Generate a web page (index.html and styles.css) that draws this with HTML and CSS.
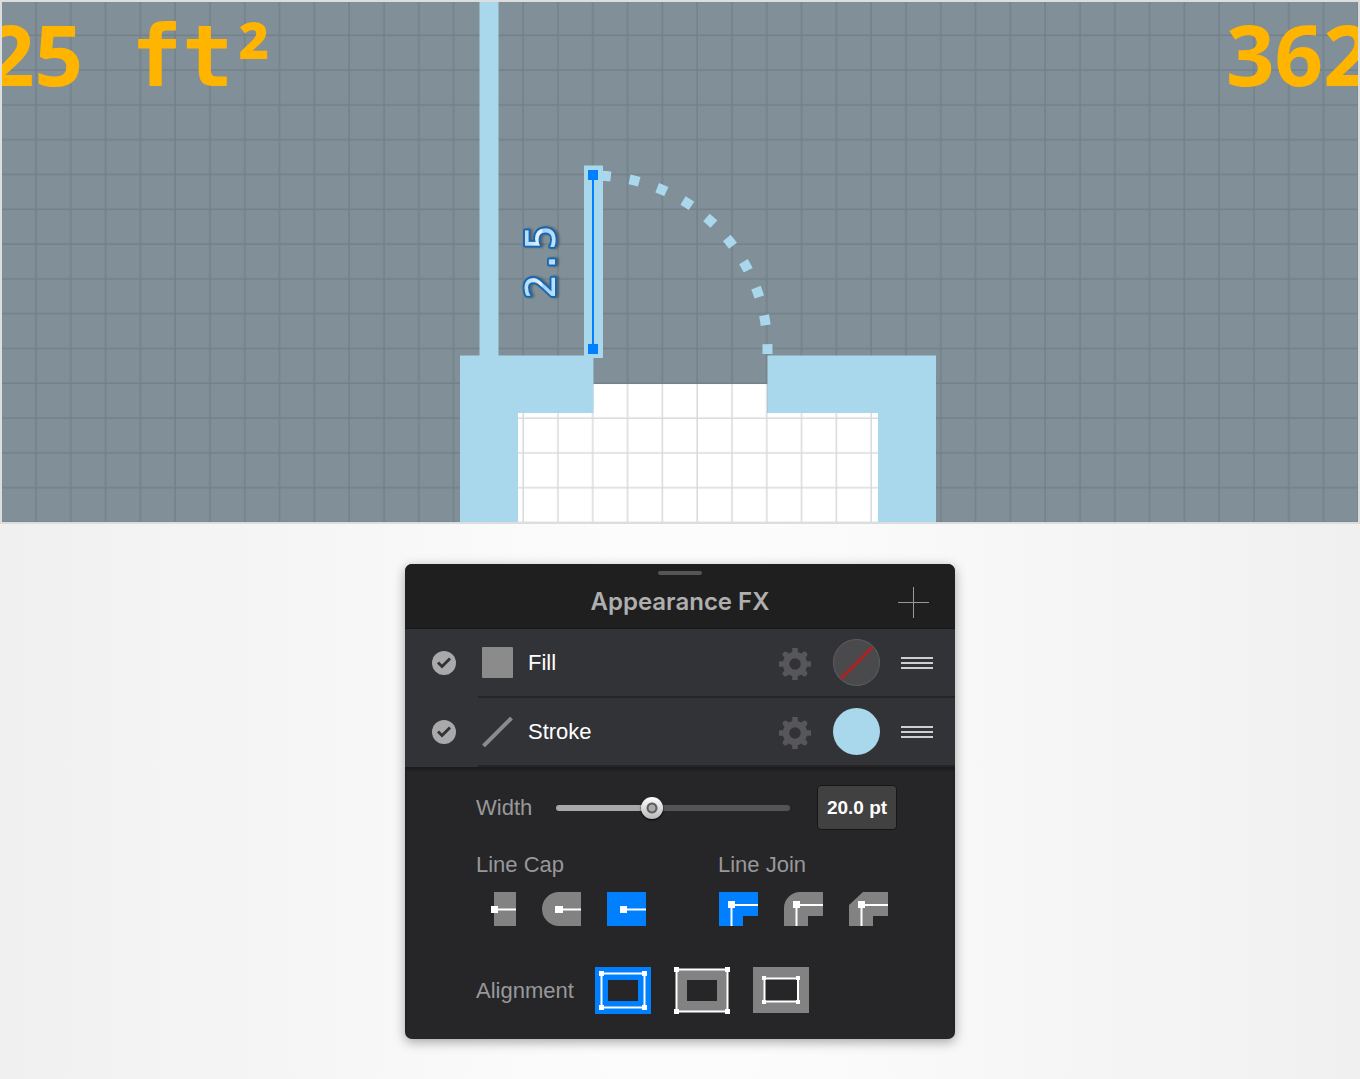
FILE: index.html
```html
<!DOCTYPE html>
<html lang="en">
<head>
<meta charset="utf-8">
<title>Appearance FX</title>
<link rel="stylesheet" href="styles.css">
</head>
<body>
<svg class="symbols" aria-hidden="true">
  <symbol id="gear" viewBox="-16 -16 32 32">
    <circle r="9" fill="none" stroke="currentColor" stroke-width="6.500"/>
    <g stroke="currentColor" stroke-width="5.500">
      <path d="M0-16V-10M0 16V10M-16 0H-10M16 0H10"/>
      <path stroke-linecap="round" d="M-9.500-9.500L-7-7M9.500 9.500L7 7M-9.500 9.500L-7 7M9.500-9.500L7-7"/>
    </g>
  </symbol>
</svg>

<svg class="plan" viewBox="2 2 1356 520" role="img" aria-label="Floor plan with a door selected">
  <defs>
    <pattern id="grid" x="2" y="1.300" width="34.8" height="34.8" patternUnits="userSpaceOnUse">
      <path class="grid-line" d="M0 34H34.8M34 0V34.8"/>
    </pattern>
    <linearGradient id="ink" x1="0" y1="0" x2="0" y2="1">
      <stop offset="0.2" stop-color="#b9dcf8"/>
      <stop offset="0.5" stop-color="#e6f5ff"/>
      <stop offset="0.55" stop-color="#9fd0fa"/>
      <stop offset="0.9" stop-color="#cdeaff"/>
    </linearGradient>
  </defs>
  <rect class="ground" x="2" y="2" width="1356" height="520"/>
  <path class="room" d="M593 384H767.500V413H878V522H518V413H593Z"/>
  <rect x="2" y="2" width="1356" height="520" fill="url(#grid)"/>
  <path class="wall" d="M479.500 2H498.500V355.500H593.500V413H518V522H460V355.500H479.500Z"/>
  <path class="wall" d="M767.500 355.500H936V522H878V413H767.500Z"/>
  <path class="swing" d="M767.500 354V350A174.500 174.500 0 0 0 593 175.500"/>
  <path class="door" d="M593.500 165.500V358"/>
  <path class="selection" d="M593 175V349"/>
  <path class="handle" d="M588 170h10v10h-10zM588 344h10v10h-10z"/>
  <text class="length" transform="translate(555 299) rotate(-90)">2.5</text>
  <text class="area" x="-14" y="86">25</text>
  <text class="area" x="131" y="86"><tspan class="unit">ft</tspan><tspan x="238" y="94">²</tspan></text>
  <text class="area" x="1226" y="86">362</text>
</svg>

<main class="stage">
  <section class="panel" aria-labelledby="panel-title">
    <header class="panel-head">
      <span class="grip"></span>
      <h1 id="panel-title">Appearance FX</h1>
      <button class="add" type="button" aria-label="Add">
        <svg width="31" height="31"><path d="M15.500 0V31M0 15.500H31"/></svg>
      </button>
    </header>

    <ul class="layers">
      <li class="layer">
        <span class="toggle"><input type="checkbox" id="fill-on" checked></span>
        <div class="layer-main">
          <svg class="kind" width="31" height="31"><rect width="31" height="31" rx="1"/></svg>
          <label for="fill-on">Fill</label>
          <button class="gear" type="button" aria-label="Fill options"><svg width="32" height="32"><use href="#gear"/></svg></button>
          <button class="swatch swatch-none" type="button" aria-label="Fill colour: none"><svg width="47" height="47"><path d="M8 39.500L39.500 8"/></svg></button>
          <button class="drag" type="button" aria-label="Reorder fill"><i></i><i></i><i></i></button>
        </div>
      </li>
      <li class="layer">
        <span class="toggle"><input type="checkbox" id="stroke-on" checked></span>
        <div class="layer-main">
          <svg class="kind" width="31" height="31"><path d="M1.500 30L29.500 2"/></svg>
          <label for="stroke-on">Stroke</label>
          <button class="gear" type="button" aria-label="Stroke options"><svg width="32" height="32"><use href="#gear"/></svg></button>
          <button class="swatch swatch-blue" type="button" aria-label="Stroke colour: light blue"></button>
          <button class="drag" type="button" aria-label="Reorder stroke"><i></i><i></i><i></i></button>
        </div>
      </li>
    </ul>

    <form class="settings">
      <div class="width-row">
        <label for="width">Width</label>
        <input class="slider" id="width" type="range" min="0" max="50" value="20">
        <input class="amount" type="text" value="20.0 pt" aria-label="Width value">
      </div>

      <div class="pair">
        <fieldset class="group">
          <legend>Line Cap</legend>
          <div class="options">
            <label class="option"><input type="radio" name="cap" aria-label="Butt cap">
              <svg width="39" height="34"><path class="shape" d="M17 0H39V34H17Z"/><path class="guide" d="M17 17.500H39"/><path class="node" d="M14 14h7v7h-7z"/></svg></label>
            <label class="option"><input type="radio" name="cap" aria-label="Round cap">
              <svg width="39" height="34"><path class="shape" d="M17 0H39V34H17A17 17 0 0 1 17 0Z"/><path class="guide" d="M17 17.500H39"/><path class="node" d="M13 14h8v7h-8z"/></svg></label>
            <label class="option"><input type="radio" name="cap" aria-label="Square cap" checked>
              <svg width="39" height="34"><path class="shape" d="M0 0H39V34H0Z"/><path class="guide" d="M17 17.500H39"/><path class="node" d="M13 14h7v7h-7z"/></svg></label>
          </div>
        </fieldset>
        <fieldset class="group">
          <legend>Line Join</legend>
          <div class="options">
            <label class="option"><input type="radio" name="join" aria-label="Miter join" checked>
              <svg width="39" height="34"><path class="shape" d="M0 0H39V24H24V34H0Z"/><path class="guide" d="M12.500 34V13H39"/><path class="node" d="M9 9h7v7h-7z"/></svg></label>
            <label class="option"><input type="radio" name="join" aria-label="Round join">
              <svg width="39" height="34"><path class="shape" d="M16 0H39V24H24V34H0V16A16 16 0 0 1 16 0Z"/><path class="guide" d="M12.500 34V13H39"/><path class="node" d="M9 9h7v7h-7z"/></svg></label>
            <label class="option"><input type="radio" name="join" aria-label="Bevel join">
              <svg width="39" height="34"><path class="shape" d="M14 0H39V24H24V34H0V13Z"/><path class="guide" d="M12.500 34V13H39"/><path class="node" d="M9 9h7v7h-7z"/></svg></label>
          </div>
        </fieldset>
      </div>

      <div class="align-row" role="radiogroup" aria-labelledby="align-title">
        <span class="align-title" id="align-title">Alignment</span>
        <label class="option"><input type="radio" name="align" aria-label="Centre" checked>
          <svg width="56" height="47"><path class="shape" fill-rule="evenodd" d="M0 0H56V47H0ZM13 13V34H43V13Z"/><path class="guide" d="M6.500 6.500H49.500V40.500H6.500Z"/><path class="node" d="M4 4h5v5h-5zM47 4h5v5h-5zM4 38h5v5h-5zM47 38h5v5h-5z"/></svg></label>
        <label class="option"><input type="radio" name="align" aria-label="Inside">
          <svg width="56" height="47"><path class="shape" fill-rule="evenodd" d="M2 2H54V45H2ZM13 13V34H43V13Z"/><path class="guide" d="M2.500 2.500H53.500V44.500H2.500Z"/><path class="node" d="M0 0h5v5h-5zM51 0h5v5h-5zM0 42h5v5h-5zM51 42h5v5h-5z"/></svg></label>
        <label class="option"><input type="radio" name="align" aria-label="Outside">
          <svg width="56" height="47"><path class="shape" fill-rule="evenodd" d="M0 0H56V46H0ZM11 11V35H45V11Z"/><path class="guide" d="M11.500 11.500H45V34.500H11.500Z"/><path class="node" d="M9 9h4v4h-4zM43 9h4v4h-4zM9 33h4v4h-4zM43 33h4v4h-4z"/></svg></label>
      </div>
    </form>
  </section>
</main>
</body>
</html>
```
FILE: styles.css
```css
* { box-sizing: border-box; }

body {
  margin: 0;
  font-family: "Liberation Sans", Arial, sans-serif;
  font-size: 22px;
  line-height: 26px;
  background: linear-gradient(90deg, #f0f0f0, #fcfcfc 45%, #fcfcfc 55%, #f0f0f0);
}

button, input { font: inherit; margin: 0; }
button { padding: 0; border: 0; background: none; flex: none; }
svg { display: block; }
.symbols { display: none; }

/* Floor plan */
.plan { width: 100%; height: auto; border: 2px solid #dcdedd; }
.ground { fill: #818f98; }
.room { fill: #fff; }
.grid-line { fill: none; stroke: #36464f; stroke-opacity: 0.2; stroke-width: 1.5; }
.wall { fill: #a9d7eb; }
.swing { fill: none; stroke: #a9d7eb; stroke-width: 10; stroke-dasharray: 10 18.9; }
.door { stroke: #a9d7eb; stroke-width: 19; }
.selection { stroke: #007fff; stroke-width: 2; }
.handle { fill: #007fff; }
.length {
  font-family: "DejaVu Sans Mono", monospace;
  font-size: 41px;
  fill: url(#ink);
  stroke: #1868b0;
  stroke-width: 4;
  stroke-linejoin: round;
  paint-order: stroke;
  filter: drop-shadow(0 2px 1px rgba(0, 0, 0, 0.3));
}
.area { font-family: "Noto Sans", sans-serif; font-weight: 700; font-size: 85px; fill: #ffb400; }
.unit { font-family: "DejaVu Sans Mono", monospace; }

/* Panel */
.stage { display: flex; justify-content: center; padding: 40px 16px; }
.panel {
  width: 100%;
  max-width: 550px;
  overflow: hidden;
  border-radius: 7px;
  background: #262628;
  box-shadow: 0 3px 12px rgba(0, 0, 0, 0.35);
}
.panel-head {
  display: grid;
  grid-template-columns: 1fr auto 1fr;
  align-items: center;
  padding: 7px 26px 0;
  background: #1f1f1f;
  border-bottom: 1px solid #17171a;
}
.grip { grid-column: 1 / -1; justify-self: center; width: 44px; height: 4px; border-radius: 2px; background: #555; }
.panel-head h1 {
  grid-column: 2;
  margin: 12px 0 11px;
  font: 600 24px/30px Inter, sans-serif;
  color: #afafaf;
}
.add { justify-self: end; padding-top: 2px; }
.add path { stroke: #999; stroke-width: 1; }

.layers { margin: 0; padding: 0; list-style: none; background: #323337; }
.layer { display: flex; }
.toggle { display: flex; align-items: center; flex: none; width: 73px; padding: 0 0 2px 27px; }
.toggle input {
  appearance: none;
  width: 24px;
  height: 24px;
  border-radius: 50%;
  background: #a9a9ab;
}
.toggle input:checked::before {
  content: "";
  display: block;
  width: 24px;
  height: 24px;
  background: #323337;
  clip-path: polygon(5px 13px, 7px 11px, 10px 14px, 17px 7px, 19px 9px, 10px 18px);
}
.layer-main {
  display: flex;
  flex: 1;
  align-items: center;
  height: 69px;
  padding: 0 22px 0 4px;
  border-bottom: 2px solid #252528;
}
.layer-main label { flex: 1; padding-left: 15px; color: #fff; }
.kind { flex: none; fill: #8b8b8b; stroke: none; }
.kind path { stroke: #8b8b8b; stroke-width: 4; }
.gear { margin-right: 22px; padding-top: 3px; color: #57575a; }
.swatch { width: 47px; height: 47px; margin-right: 21px; border-radius: 50%; }
.swatch-none { background: #4a4a4c; box-shadow: inset 0 0 0 1px #5a5a5c; }
.swatch-none path { stroke: #b0211f; stroke-width: 3; }
.swatch-blue { background: #a9d7eb; }
.drag { display: grid; gap: 3px; width: 32px; }
.drag i { height: 2px; background: #cfcfd2; }

/* Stroke settings */
.settings { padding: 18px 16px 25px 71px; color: #98989a; box-shadow: inset 0 3px 3px rgba(0, 0, 0, 0.25); }
.width-row { display: flex; align-items: center; }
.width-row label { width: 80px; }
.slider {
  appearance: none;
  flex: 0 1 234px;
  min-width: 0;
  height: 22px;
  background: none;
}
.slider::-webkit-slider-runnable-track {
  height: 6px;
  border-radius: 3px;
  background: linear-gradient(90deg, #a8a8a8 40%, #545456 40%);
}
.slider::-webkit-slider-thumb {
  appearance: none;
  width: 22px;
  height: 22px;
  margin-top: -8px;
  border-radius: 50%;
  background: radial-gradient(circle, #aaa 3px, #555 4px, #666 5px, transparent 6px), linear-gradient(#fff, #b8b8b8);
  box-shadow: 0 1px 2px #000;
}
.amount {
  width: 80px;
  height: 45px;
  margin-left: 27px;
  padding: 0;
  border: 1px solid #161617;
  border-radius: 4px;
  background: #414142;
  color: #fff;
  font-size: 19px;
  font-weight: 700;
  text-align: center;
}
.pair { display: grid; grid-template-columns: 242px 1fr; margin-top: 22px; }
.group { min-width: 0; margin: 0; padding: 0; border: 0; }
.group legend { padding: 0; }
.options { display: flex; gap: 26px; padding: 14px 1px 0; }
.option { position: relative; display: block; color: #828282; }
.option input { position: absolute; inset: 0; width: 100%; height: 100%; opacity: 0; }
.option:has(:checked) { color: #007fff; }
.shape { fill: currentColor; }
.guide { fill: none; stroke: #fff; stroke-width: 2; }
.node { fill: #fff; }
.align-row { display: flex; align-items: center; gap: 23px; margin-top: 41px; }
.align-title { width: 96px; }
```
